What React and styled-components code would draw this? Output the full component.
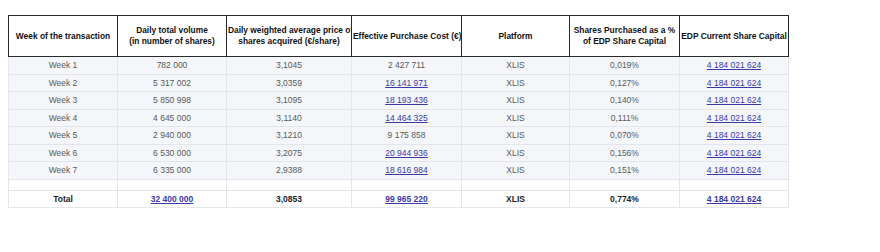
import React from 'react';
import styled, { createGlobalStyle } from 'styled-components';

const GlobalStyle = createGlobalStyle`
  body {
    margin: 0;
    background: #ffffff;
    font-family: "Liberation Sans", Arial, sans-serif;
  }
`;

const Page = styled.div`
  padding: 15px 0 0 8px;
`;

const Table = styled.table`
  width: 780px;
  table-layout: fixed;
  border-collapse: collapse;
  font-size: 8.5px;
`;

const HeadCell = styled.th`
  height: 40px;
  padding: 0 1px;
  border: 1px solid #2a2a2a;
  color: #111;
  font-weight: bold;
  font-size: 8.4px;
  line-height: 11px;
  text-align: center;
  white-space: nowrap;
  overflow: hidden;
`;

const Row = styled.tr`
  background: ${(p) => (p.$plain ? '#ffffff' : '#f4f6f9')};
`;

const Cell = styled.td`
  height: ${(p) => (p.$spacer ? '10px' : '16.5px')};
  padding: 0 2px;
  border: 1px solid #e3e6ea;
  border-top: none;
  color: ${(p) => (p.$strong ? '#222' : '#5a5a5a')};
  font-weight: ${(p) => (p.$strong ? 'bold' : 'normal')};
  font-size: 8.5px;
  text-align: center;
  white-space: nowrap;
`;

const Link = styled.a`
  color: #3a3aa8;
  text-decoration: underline;
  font-weight: inherit;
`;

const widths = [109, 109, 125, 110, 108, 110, 109];

const headers = [
  ['Week of the transaction'],
  ['Daily total volume', '(in number of shares)'],
  ['Daily weighted average price of', 'shares acquired (€/share)'],
  ['Effective Purchase Cost (€)'],
  ['Platform'],
  ['Shares Purchased as a %', 'of EDP Share Capital'],
  ['EDP Current Share Capital'],
];

const rows = [
  ['Week 1', '782 000', '3,1045', '2 427 711', false, '0,019%'],
  ['Week 2', '5 317 002', '3,0359', '16 141 971', true, '0,127%'],
  ['Week 3', '5 850 998', '3,1095', '18 193 436', true, '0,140%'],
  ['Week 4', '4 645 000', '3,1140', '14 464 325', true, '0,111%'],
  ['Week 5', '2 940 000', '3,1210', '9 175 858', false, '0,070%'],
  ['Week 6', '6 530 000', '3,2075', '20 944 936', true, '0,156%'],
  ['Week 7', '6 335 000', '2,9388', '18 616 984', true, '0,151%'],
];

const capital = '4 184 021 624';

export default function App() {
  return (
    <Page>
      <GlobalStyle />
      <Table>
        <colgroup>
          {widths.map((w, i) => (
            <col key={i} style={{ width: w }} />
          ))}
        </colgroup>
        <thead>
          <tr>
            {headers.map((lines, i) => (
              <HeadCell key={i}>
                {lines.map((l, j) => (
                  <React.Fragment key={j}>
                    {j > 0 && <br />}
                    {l}
                  </React.Fragment>
                ))}
              </HeadCell>
            ))}
          </tr>
        </thead>
        <tbody>
          {rows.map(([week, vol, price, cost, linked, pct]) => (
            <Row key={week}>
              <Cell>{week}</Cell>
              <Cell>{vol}</Cell>
              <Cell>{price}</Cell>
              <Cell>{linked ? <Link href="#">{cost}</Link> : cost}</Cell>
              <Cell>XLIS</Cell>
              <Cell>{pct}</Cell>
              <Cell>
                <Link href="#">{capital}</Link>
              </Cell>
            </Row>
          ))}
          <Row $plain>
            {widths.map((_, i) => (
              <Cell key={i} $spacer />
            ))}
          </Row>
          <Row $plain>
            <Cell $strong>Total</Cell>
            <Cell $strong>
              <Link href="#">32 400 000</Link>
            </Cell>
            <Cell $strong>3,0853</Cell>
            <Cell $strong>
              <Link href="#">99 965 220</Link>
            </Cell>
            <Cell $strong>XLIS</Cell>
            <Cell $strong>0,774%</Cell>
            <Cell $strong>
              <Link href="#">{capital}</Link>
            </Cell>
          </Row>
        </tbody>
      </Table>
    </Page>
  );
}
